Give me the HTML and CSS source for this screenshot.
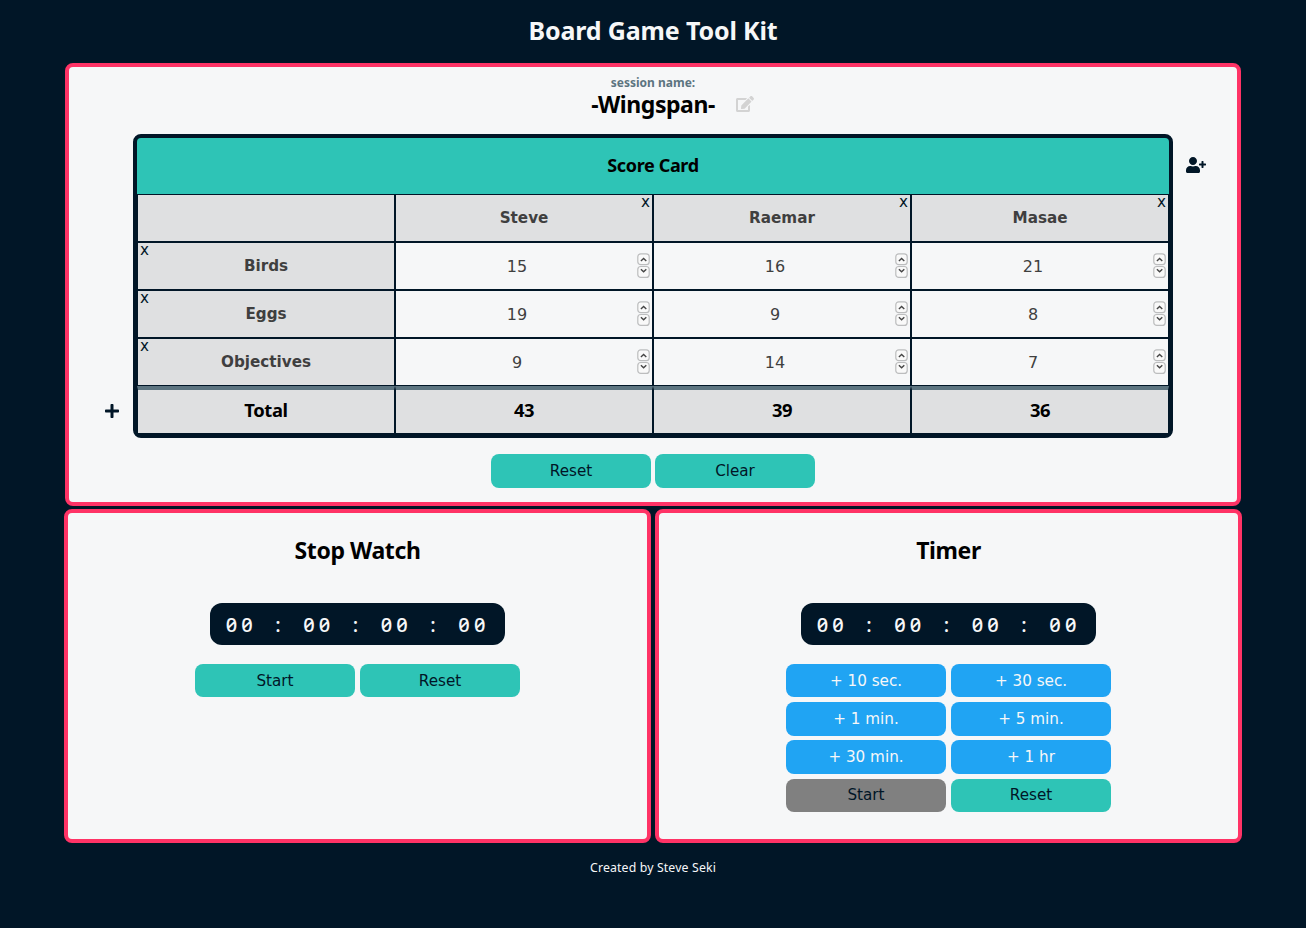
FILE: index.html
```html
<!DOCTYPE html>
<html lang="en">
<head>
<meta charset="utf-8">
<title>Board Game Tool Kit</title>
<link rel="stylesheet" href="styles.css">
</head>
<body>
<svg class="defs" width="0" height="0">
  <symbol id="spin" viewBox="0 0 13 26">
    <g fill="#f9f9f9" stroke="#bcbdbe" stroke-width="1.2">
      <rect x=".8" y=".8" width="11.4" height="10.9" rx="3"/>
      <rect x=".8" y="13.5" width="11.4" height="10.9" rx="3"/>
    </g>
    <path d="M3.9 8 6.6 5.5 9.3 8M3.9 16.3 6.6 18.8 9.3 16.3" fill="none" stroke="#444" stroke-width="1.4"/>
  </symbol>
</svg>
<h1 class="title"><span>Board Game Tool Kit</span></h1>
<main>
  <section class="panel score">
    <p class="label"><span>session name:</span></p>
    <div class="session">
      <h2 class="name"><span>-Wingspan-</span></h2>
      <svg class="edit" viewBox="0 0 576 512"><path d="M402.6 83.2l90.2 90.2c3.8 3.8 3.8 10 0 13.8L274.4 405.6l-92.8 10.3c-12.4 1.4-22.9-9.1-21.5-21.5l10.3-92.8L388.8 83.2c3.8-3.8 10-3.8 13.8 0zm162-22.9l-48.8-48.8c-15.2-15.2-39.9-15.2-55.2 0l-35.4 35.4c-3.8 3.8-3.8 10 0 13.8l90.2 90.2c3.8 3.8 10 3.8 13.8 0l35.4-35.4c15.2-15.3 15.2-40 0-55.2zM384 346.2V448H64V128h229.8c3.2 0 6.2-1.3 8.5-3.5l40-40c7.6-7.6 2.2-20.5-8.5-20.5H48C21.500 64 0 85.500 0 112v352c0 26.500 21.500 48 48 48h352c26.500 0 48-21.500 48-48V306.200c0-10.700-12.900-16-20.500-8.500l-40 40c-2.200 2.300-3.500 5.300-3.500 8.500z"/></svg>
    </div>
    <div class="board-row">
      <svg class="add-row" viewBox="0 0 448 512"><path d="M416 208H272V64c0-17.670-14.330-32-32-32h-32c-17.670 0-32 14.330-32 32v144H32c-17.670 0-32 14.330-32 32v32c0 17.670 14.330 32 32 32h144v144c0 17.670 14.330 32 32 32h32c17.670 0 32-14.330 32-32V304h144c17.670 0 32-14.330 32-32v-32c0-17.670-14.330-32-32-32z"/></svg>
      <div class="board">
        <div class="caption"><span>Score Card</span></div>
        <div class="cell head"></div>
        <div class="cell head">Steve<i class="x right">x</i></div>
        <div class="cell head">Raemar<i class="x right">x</i></div>
        <div class="cell head">Masae<i class="x right">x</i></div>
        <div class="cell head">Birds<i class="x">x</i></div>
        <div class="cell num"><b>15</b><svg><use href="#spin"/></svg></div>
        <div class="cell num"><b>16</b><svg><use href="#spin"/></svg></div>
        <div class="cell num"><b>21</b><svg><use href="#spin"/></svg></div>
        <div class="cell head">Eggs<i class="x">x</i></div>
        <div class="cell num"><b>19</b><svg><use href="#spin"/></svg></div>
        <div class="cell num"><b>9</b><svg><use href="#spin"/></svg></div>
        <div class="cell num"><b>8</b><svg><use href="#spin"/></svg></div>
        <div class="cell head">Objectives<i class="x">x</i></div>
        <div class="cell num"><b>9</b><svg><use href="#spin"/></svg></div>
        <div class="cell num"><b>14</b><svg><use href="#spin"/></svg></div>
        <div class="cell num"><b>7</b><svg><use href="#spin"/></svg></div>
        <div class="cell total"><span>Total</span></div>
        <div class="cell total"><span>43</span></div>
        <div class="cell total"><span>39</span></div>
        <div class="cell total"><span>36</span></div>
      </div>
      <svg class="add-user" viewBox="0 0 640 512"><path d="M624 208h-64v-64c0-8.800-7.200-16-16-16h-32c-8.800 0-16 7.200-16 16v64h-64c-8.800 0-16 7.200-16 16v32c0 8.800 7.200 16 16 16h64v64c0 8.800 7.200 16 16 16h32c8.800 0 16-7.200 16-16v-64h64c8.800 0 16-7.200 16-16v-32c0-8.800-7.200-16-16-16zm-400 48c70.700 0 128-57.300 128-128S294.700 0 224 0 96 57.300 96 128s57.300 128 128 128zm89.600 32h-16.700c-22.200 10.200-46.900 16-72.900 16s-50.600-5.800-72.900-16h-16.700C60.200 288 0 348.200 0 422.400V464c0 26.500 21.500 48 48 48h352c26.500 0 48-21.500 48-48v-41.600c0-74.200-60.200-134.400-134.400-134.400z"/></svg>
    </div>
    <div class="actions">
      <button class="btn">Reset</button>
      <button class="btn">Clear</button>
    </div>
  </section>
  <div class="tools">
    <section class="panel tool">
      <h2 class="tool-title"><span>Stop Watch</span></h2>
      <div class="clock"><i>0</i><i>0</i><i></i><i>:</i><i></i><i>0</i><i>0</i><i></i><i>:</i><i></i><i>0</i><i>0</i><i></i><i>:</i><i></i><i>0</i><i>0</i></div>
      <div class="buttons">
        <button class="btn">Start</button>
        <button class="btn">Reset</button>
      </div>
    </section>
    <section class="panel tool">
      <h2 class="tool-title"><span>Timer</span></h2>
      <div class="clock"><i>0</i><i>0</i><i></i><i>:</i><i></i><i>0</i><i>0</i><i></i><i>:</i><i></i><i>0</i><i>0</i><i></i><i>:</i><i></i><i>0</i><i>0</i></div>
      <div class="buttons">
        <button class="btn blue">+ 10 sec.</button>
        <button class="btn blue">+ 30 sec.</button>
        <button class="btn blue">+ 1 min.</button>
        <button class="btn blue">+ 5 min.</button>
        <button class="btn blue">+ 30 min.</button>
        <button class="btn blue">+ 1 hr</button>
        <button class="btn gray">Start</button>
        <button class="btn">Reset</button>
      </div>
    </section>
  </div>
</main>
<footer><span>Created by Steve Seki</span></footer>
</body>
</html>
```
FILE: styles.css
```css
* { box-sizing: border-box; }
body {
  margin: 0;
  height: 928px;
  overflow: hidden;
  background: #011627;
  font: 16px/20px "DejaVu Sans", sans-serif;
  color: #000;
}
h1, h2, p { margin: 0; }
i { font-style: normal; }
.defs { display: block; }
.title, .name, .tool-title, .label, .caption, .total, footer {
  font-family: "Noto Sans", sans-serif;
  font-weight: 700;
  text-align: center;
}
.title {
  height: 63px;
  font-size: 25px;
  line-height: 61px;
  letter-spacing: -0.15px;
  color: #f6f7f8;
}
.panel {
  background: #f6f7f8;
  border: 4px solid #ff3366;
  border-radius: 8px;
}
.score {
  width: 1176px;
  height: 443px;
  margin: 0 auto;
  padding-top: 7px;
}
.label {
  font-size: 12px;
  line-height: 17px;
  color: #5c7480;
}
.session {
  display: grid;
  grid-template-columns: 1fr 130px 1fr;
  align-items: center;
  height: 26px;
}
.name {
  font-size: 23px;
  line-height: 26px;
  letter-spacing: -0.45px;
  grid-column: 2;
  white-space: nowrap;
}
.edit {
  width: 18px;
  height: 16px;
  margin-left: 18px;
  fill: #d3d3d3;
}
.board-row {
  display: grid;
  grid-template-columns: 64px 1040px 64px;
  margin-top: 17px;
}
.board {
  display: grid;
  grid-template-columns: repeat(4, 258px);
  grid-template-rows: 56px repeat(5, 48px);
  border: 4px solid #011627;
  border-radius: 8px;
  background: #011627;
}
.caption {
  grid-column: 1 / -1;
  background: #2ec4b6;
  border-radius: 4px 4px 0 0;
  font-size: 18px;
  line-height: 55px;
  letter-spacing: -0.35px;
}
.cell {
  display: flex;
  align-items: center;
  justify-content: center;
  position: relative;
  border: 1px solid #011627;
  background: #dfe0e1;
}
.head {
  font-weight: 700;
  font-size: 15.2px;
  color: #3f3f3f;
  padding-bottom: 1px;
}
.x {
  position: absolute;
  left: 2px;
  top: -3px;
  font-size: 15.2px;
  font-weight: 400;
  color: #011627;
}
.x.right { left: auto; right: 2px; }
.num {
  background: #f6f7f8;
  color: #3f3f3f;
}
.num b {
  flex: 1;
  text-align: center;
  font-weight: 400;
  padding: 2px 0 0 1px;
}
.num svg {
  width: 13px;
  height: 26px;
  margin-right: 2px;
}
.total {
  border-top: 4px solid #5c7480;
  padding-bottom: 3px;
  font-size: 18.4px;
  letter-spacing: -0.4px;
}
.add-row {
  width: 14px;
  height: 16px;
  align-self: end;
  margin: 0 0 19px 36px;
  fill: #011627;
}
.add-user {
  width: 20px;
  height: 16px;
  margin: 22.5px 0 0 13px;
  fill: #011627;
}
.actions {
  display: flex;
  justify-content: center;
  gap: 4px;
  margin-top: 16px;
}
.btn {
  width: 160px;
  height: 33.5px;
  padding: 0;
  border: 0;
  border-radius: 8px;
  background: #2ec4b6;
  color: #011627;
  font: 15.2px "DejaVu Sans", sans-serif;
}
.blue { background: #20a4f3; color: #f6f7f8; }
.gray { background: #808080; }
.tools {
  display: grid;
  grid-template-columns: 587px 587px;
  justify-content: center;
  gap: 4px;
  margin-top: 3px;
}
.tool { height: 334px; }
.tool-title {
  height: 90px;
  font-size: 23px;
  line-height: 75px;
  letter-spacing: -0.4px;
}
.clock {
  display: grid;
  grid-template-columns: repeat(17, 15.52px);
  width: 295px;
  height: 42px;
  margin: 0 auto;
  padding-left: 13.6px;
  background: #011627;
  border-radius: 12px;
  color: #f6f7f8;
  font: 500 20px/43px "Noto Sans", sans-serif;
  font-feature-settings: "zero";
  text-align: center;
}
.buttons {
  display: grid;
  grid-template-columns: 160px 160px;
  justify-content: center;
  gap: 4.8px 5px;
  margin-top: 18.8px;
}
footer {
  margin-top: 15px;
  font-size: 12.3px;
  font-weight: 400;
  letter-spacing: 0.14px;
  color: #f6f7f8;
}
```
